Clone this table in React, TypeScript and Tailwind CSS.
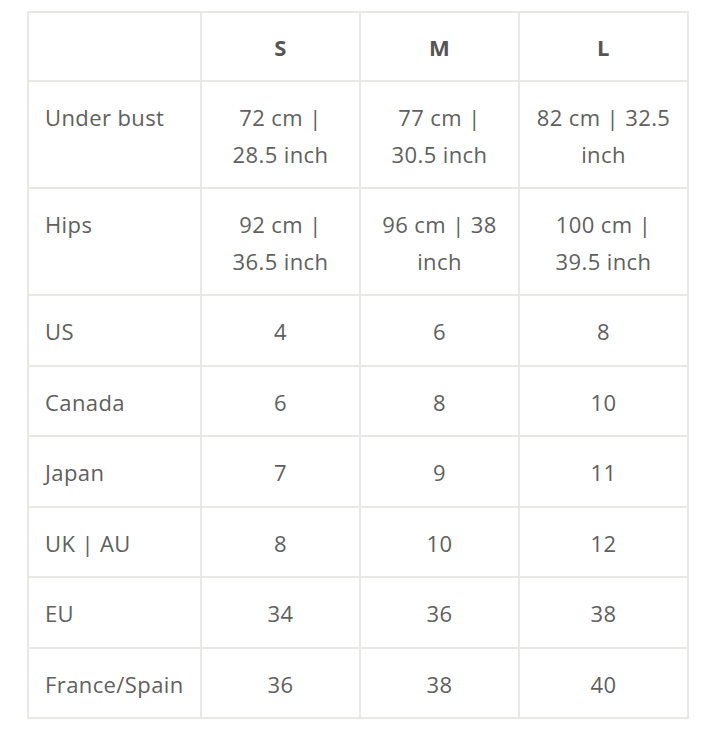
import React from "react";

const rows: { label: string; s: string[] }[] = [
  { label: "Under bust", s: ["72 cm | 28.5 inch", "77 cm | 30.5 inch", "82 cm | 32.5 inch"] },
  { label: "Hips", s: ["92 cm | 36.5 inch", "96 cm | 38 inch", "100 cm | 39.5 inch"] },
  { label: "US", s: ["4", "6", "8"] },
  { label: "Canada", s: ["6", "8", "10"] },
  { label: "Japan", s: ["7", "9", "11"] },
  { label: "UK | AU", s: ["8", "10", "12"] },
  { label: "EU", s: ["34", "36", "38"] },
  { label: "France/Spain", s: ["36", "38", "40"] },
];

export default function App() {
  const cell = "border-2 border-[#e8e8e5]";
  return (
    <div className="bg-white min-h-[729px] pl-[27px] pt-[11px]" style={{ fontFamily: "'Open Sans', Lato, sans-serif" }}>
      <table className="border-collapse text-[22px] leading-[36.5px] text-[#606060] font-normal tracking-[0.4px] table-fixed w-[660px]">
        <colgroup>
          <col className="w-[173px]" />
          <col className="w-[159px]" />
          <col className="w-[159px]" />
          <col className="w-[169px]" />
        </colgroup>
        <thead>
          <tr className="h-[69px]">
            <th className={cell}></th>
            <th className={`${cell} align-middle font-bold text-[22px] text-[#555555] pt-[2px]`}>S</th>
            <th className={`${cell} align-middle font-bold text-[22px] text-[#555555] pt-[2px]`}>M</th>
            <th className={`${cell} align-middle font-bold text-[22px] text-[#555555] pt-[2px]`}>L</th>
          </tr>
        </thead>
        <tbody>
          {rows.map((r) => (
            <tr key={r.label}>
              <td className={`${cell} align-top text-left pl-[16px] pr-1 pt-[17px] pb-[15px]`}>{r.label}</td>
              {r.s.map((v, i) => (
                <td key={i} className={`${cell} align-top text-center px-[14px] pt-[17px] pb-[15px]`}>{v}</td>
              ))}
            </tr>
          ))}
        </tbody>
      </table>
    </div>
  );
}
